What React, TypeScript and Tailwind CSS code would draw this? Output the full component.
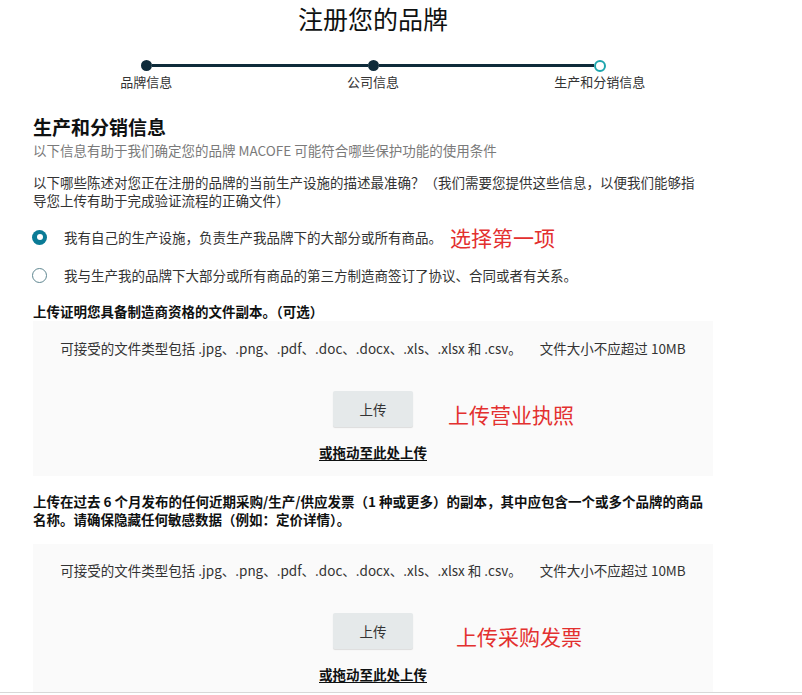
import React from "react";

const font = { fontFamily: '"Noto Sans CJK SC", "Noto Sans", sans-serif' };

function Dropzone({ annot, annotLeft, pb, pt }: { annot: string; annotLeft: string; pb: string; pt: string }) {
  return (
    <div className={`bg-[#fafafa] flex flex-col items-center ${pt} ${pb}`}>
      <div className="text-[13.5px] leading-[18px] text-[#333]">
        可接受的文件类型包括 .jpg、.png、.pdf、.doc、.docx、.xls、.xlsx 和 .csv。
        <span className="ml-[18px]">文件大小不应超过 10MB</span>
      </div>
      <div className="relative mt-[34px] w-full flex justify-center">
        <button className="w-[80px] h-[36px] bg-[#e5e9ea] rounded-[2px] shadow-[0_1px_1px_rgba(0,0,0,0.12)] text-[13.5px] text-[#333]">
          上传
        </button>
        <span className={`absolute top-[10px] ${annotLeft} text-[21px] leading-[26px] text-[#e3302f] whitespace-nowrap`}>
          {annot}
        </span>
      </div>
      <div className="mt-[16px] text-[13.5px] leading-[18px] font-bold text-[#0f1111] underline underline-offset-2">
        或拖动至此处上传
      </div>
    </div>
  );
}

export default function App() {
  return (
    <div className="w-[802px] h-[695px] overflow-hidden bg-white text-[#0f1111]" style={font}>
      <div className="ml-[33px] w-[680px]">
        <div className="text-center text-[25px] leading-[36px] text-[#0f1111]">注册您的品牌</div>

        {/* stepper */}
        <div className="mt-[24px] grid grid-cols-3">
          {[
            { label: "品牌信息", left: false, right: true, done: true },
            { label: "公司信息", left: true, right: true, done: true },
            { label: "生产和分销信息", left: true, right: false, done: false },
          ].map((s, i) => (
            <div key={i} className="flex flex-col items-center">
              <div className="w-full flex items-center h-[11px]">
                <div className={`flex-1 h-[3px] ${s.left ? "bg-[#0e2b3a]" : ""}`} />
                {s.done ? (
                  <div className="w-[11px] h-[11px] rounded-full bg-[#0e2b3a]" />
                ) : (
                  <div className="w-[12px] h-[12px] rounded-full border-2 border-[#1ea5ad] bg-white" />
                )}
                <div className={`flex-1 h-[3px] ${s.right ? "bg-[#0e2b3a]" : ""}`} />
              </div>
              <div className="mt-[2px] text-[13px] leading-[18px] text-[#333]">{s.label}</div>
            </div>
          ))}
        </div>

        <div className="mt-[23px] text-[19px] leading-[26px] font-bold text-[#0f1111]">生产和分销信息</div>
        <div className="mt-[1px] text-[13.5px] leading-[18px] text-[#7a7a7a]">
          以下信息有助于我们确定您的品牌 MACOFE 可能符合哪些保护功能的使用条件
        </div>
        <div className="mt-[14px] text-[13.5px] leading-[18px] text-[#333]">
          以下哪些陈述对您正在注册的品牌的当前生产设施的描述最准确？（我们需要您提供这些信息，以便我们能够指
          <br />
          导您上传有助于完成验证流程的正确文件）
        </div>

        <div className="mt-[16px] flex items-center h-[24px]">
          <div className="ml-[-1px] w-[15px] h-[15px] rounded-full bg-[#0a7b96] flex items-center justify-center">
            <div className="w-[6px] h-[6px] rounded-full bg-white" />
          </div>
          <span className="ml-[17px] text-[13.5px] leading-[18px] text-[#333]">
            我有自己的生产设施，负责生产我品牌下的大部分或所有商品。
          </span>
          <span className="ml-[8px] text-[21px] leading-[24px] text-[#e3302f]">选择第一项</span>
        </div>
        <div className="mt-[14px] flex items-center h-[24px]">
          <div className="ml-[-1px] w-[15px] h-[15px] rounded-full border-[1.5px] border-[#5f8791] bg-white" />
          <span className="ml-[17px] text-[13.5px] leading-[18px] text-[#333]">
            我与生产我的品牌下大部分或所有商品的第三方制造商签订了协议、合同或者有关系。
          </span>
        </div>

        <div className="mt-[15px] text-[13.5px] leading-[18px] font-bold text-[#0f1111]">
          上传证明您具备制造商资格的文件副本。（可选）
        </div>
        <div className="mt-[1px]">
          <Dropzone annot="上传营业执照" annotLeft="left-[415px]" pt="pt-[18px]" pb="pb-[15px]" />
        </div>

        <div className="mt-[16px] text-[13.5px] leading-[18px] font-bold text-[#0f1111]">
          上传在过去 6 个月发布的任何近期采购/生产/供应发票（1 种或更多）的副本，其中应包含一个或多个品牌的商品
          <br />
          名称。请确保隐藏任何敏感数据（例如：定价详情）。
        </div>
        <div className="mt-[16px]">
          <Dropzone annot="上传采购发票" annotLeft="left-[423px]" pt="pt-[17px]" pb="pb-[9px]" />
        </div>
      </div>
      <div className="w-full border-t border-[#d8d8d8]" />
    </div>
  );
}
